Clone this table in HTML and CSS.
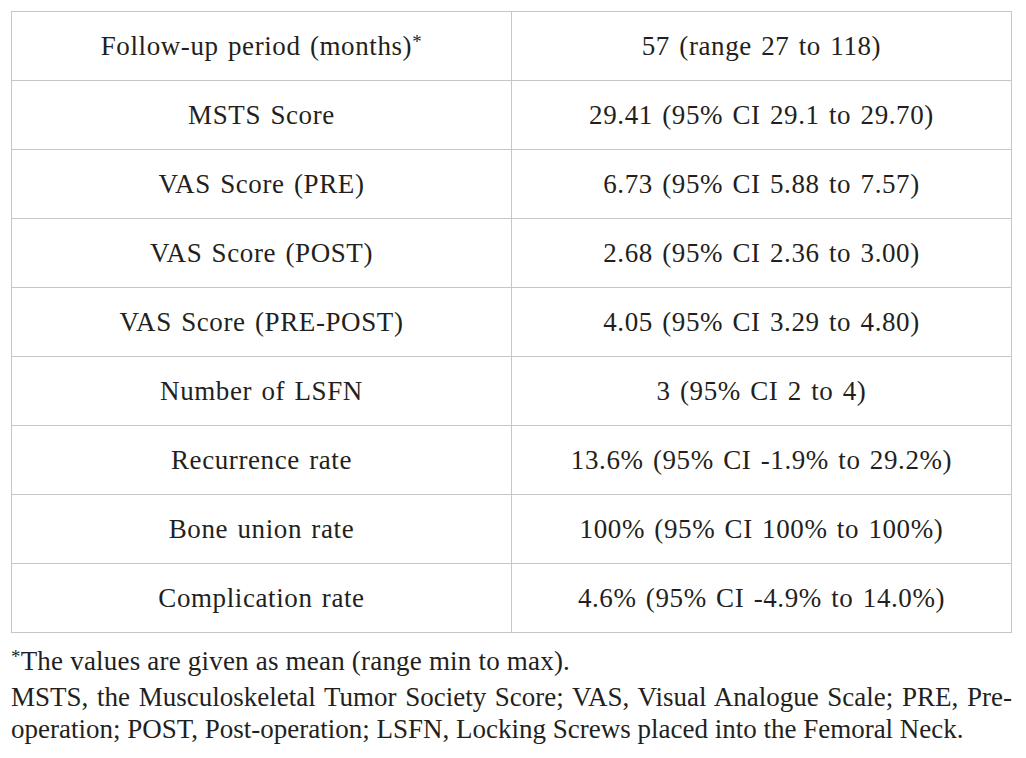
FILE: index.html
```html
<!DOCTYPE html>
<html>
<head>
<meta charset="utf-8">
<link rel="stylesheet" href="styles.css">
</head>
<body>
<div class="page">
<table class="data">
<tbody>
<tr><td>Follow-up period (months)<span class="ast">*</span></td><td>57 (range 27 to 118)</td></tr>
<tr><td>MSTS Score</td><td>29.41 (95% CI 29.1 to 29.70)</td></tr>
<tr><td>VAS Score (PRE)</td><td>6.73 (95% CI 5.88 to 7.57)</td></tr>
<tr><td>VAS Score (POST)</td><td>2.68 (95% CI 2.36 to 3.00)</td></tr>
<tr><td>VAS Score (PRE-POST)</td><td>4.05 (95% CI 3.29 to 4.80)</td></tr>
<tr><td>Number of LSFN</td><td>3 (95% CI 2 to 4)</td></tr>
<tr><td>Recurrence rate</td><td>13.6% (95% CI -1.9% to 29.2%)</td></tr>
<tr><td>Bone union rate</td><td>100% (95% CI 100% to 100%)</td></tr>
<tr><td>Complication rate</td><td>4.6% (95% CI -4.9% to 14.0%)</td></tr>
</tbody>
</table>
<div class="notes">
<p class="first"><span class="ast">*</span>The values are given as mean (range min to max).</p>
<p class="just">MSTS, the Musculoskeletal Tumor Society Score; VAS, Visual Analogue Scale; PRE, Pre-operation; POST, Post-operation; LSFN, Locking Screws placed into the Femoral Neck.</p>
</div>
</div>
</body>
</html>
```
FILE: styles.css
```css
html, body {
  margin: 0;
  padding: 0;
  background: #ffffff;
}
.page {
  padding: 11px 14px 0 11px;
  font-family: "Liberation Serif", "Times New Roman", serif;
  color: #231f20;
  font-size: 27px;
}
.data {
  width: 1001px;
  border-collapse: collapse;
}
.data td {
  border: 1px solid #c6c6c6;
  height: 68px;
  padding: 0;
  text-align: center;
  vertical-align: middle;
  width: 50%;
  line-height: 1;
  letter-spacing: 0.6px;
  word-spacing: 2px;
}
.ast {
  font-size: 0.7em;
  vertical-align: 0.35em;
  line-height: 0;
}
.notes {
  width: 1001px;
  margin-top: 12px;
  line-height: 32px;
}
.notes p {
  margin: 0;
}
.notes .first {
  margin-bottom: 4px;
  letter-spacing: 0.2px;
}
.just {
  text-align: justify;
}
```
